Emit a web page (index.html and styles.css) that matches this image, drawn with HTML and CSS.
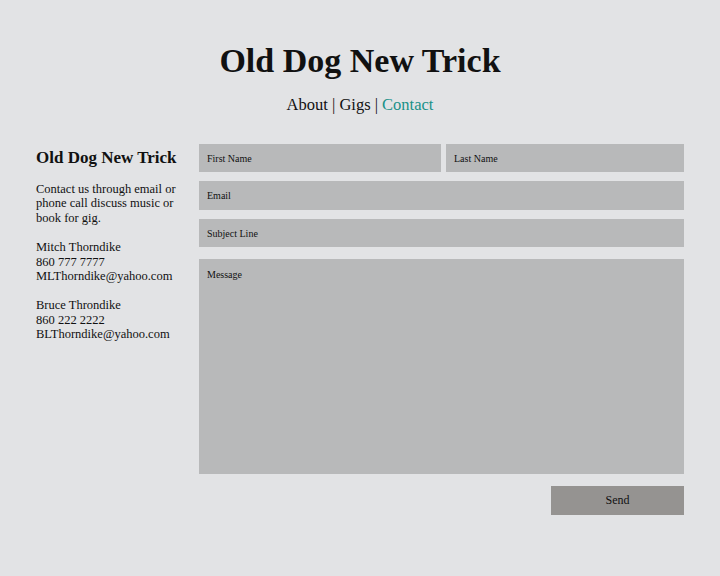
FILE: index.html
```html
<!DOCTYPE html>
<html lang="en">
<head>
<meta charset="utf-8">
<title>Old Dog New Trick - Contact</title>
<link rel="stylesheet" href="styles.css">
</head>
<body>
<header class="site-header">
  <h1 class="site-title">Old Dog New Trick</h1>
  <nav class="site-nav">
    <a href="#" class="nav-link">About</a> | <a href="#" class="nav-link">Gigs</a> | <a href="#" class="nav-link active">Contact</a>
  </nav>
</header>
<main class="contact">
  <aside class="info">
    <h2 class="info-title">Old Dog New Trick</h2>
    <p class="info-text">Contact us through email or phone call discuss music or book for gig.</p>
    <p class="info-text">Mitch Thorndike<br>860 777 7777<br>MLThorndike@yahoo.com</p>
    <p class="info-text">Bruce Throndike<br>860 222 2222<br>BLThorndike@yahoo.com</p>
  </aside>
  <form class="form">
    <div class="row">
      <input class="field first" type="text" placeholder="First Name">
      <input class="field" type="text" placeholder="Last Name">
    </div>
    <input class="field tall" type="email" placeholder="Email">
    <input class="field" type="text" placeholder="Subject Line">
    <textarea class="field message" placeholder="Message"></textarea>
    <div class="actions">
      <button class="send" type="button">Send</button>
    </div>
  </form>
</main>
</body>
</html>
```
FILE: styles.css
```css
html, body {
  margin: 0;
  padding: 0;
}
body {
  background: #e2e3e5;
  font-family: "Liberation Serif", "Times New Roman", serif;
  color: #111;
  width: 720px;
  height: 576px;
}
.site-header {
  text-align: center;
  padding-top: 42px;
}
.site-title {
  margin: 0;
  font-size: 34px;
  line-height: 38px;
  font-weight: bold;
}
.site-nav {
  margin-top: 15px;
  font-size: 16.5px;
  line-height: 20px;
  color: #111;
}
.nav-link {
  color: #111;
  text-decoration: none;
}
.nav-link.active {
  color: #1a9189;
}
.contact {
  display: flex;
  gap: 20px;
  padding: 29px 36px 0 36px;
}
.info {
  width: 143px;
  flex: none;
}
.info-title {
  margin: 4px 0 14px 0;
  font-size: 17px;
  line-height: 20px;
  font-weight: bold;
}
.info-text {
  margin: 0 0 15px 0;
  font-size: 12.5px;
  line-height: 14.4px;
}
.form {
  flex: 1;
  display: flex;
  flex-direction: column;
  gap: 9px;
}
.row {
  display: flex;
  gap: 5px;
}
.row .field {
  flex: 1;
  min-width: 0;
}
.row .field.first {
  flex: 0 0 242px;
}
.field {
  box-sizing: border-box;
  height: 28px;
  border: none;
  background: #b8b9ba;
  font-family: "Liberation Serif", "Times New Roman", serif;
  font-size: 10px;
  padding: 0 8px;
  color: #111;
  outline: none;
}
.field.tall {
  height: 29px;
}
.field::placeholder {
  color: #111;
  opacity: 1;
}
.message {
  height: 215px;
  margin-top: 3px;
  padding-top: 10px;
  resize: none;
}
.actions {
  display: flex;
  justify-content: flex-end;
  margin-top: 3px;
}
.send {
  width: 133px;
  height: 29px;
  border: none;
  background: #959391;
  font-family: "Liberation Serif", "Times New Roman", serif;
  font-size: 12px;
  color: #111;
}
```
